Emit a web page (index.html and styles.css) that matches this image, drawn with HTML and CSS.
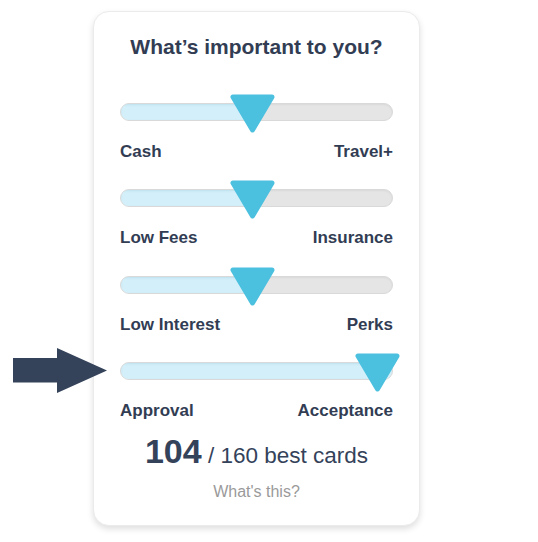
FILE: index.html
```html
<!DOCTYPE html>
<html>
<head>
<meta charset="utf-8">
<link rel="stylesheet" href="styles.css">
</head>
<body>
<svg class="pointer" width="96" height="46" viewBox="0 0 96 46" aria-hidden="true">
  <path d="M0 10 H44 V0 L94 22.5 L44 45 V34.5 H0 Z" fill="#34425a"/>
</svg>
<div class="card">
  <h1 class="title">What’s important to you?</h1>

  <div class="slider">
    <div class="track">
      <div class="fill" style="width:48.7%"></div>
    </div>
    <svg class="thumb" style="left:calc(48.7% - 22.5px)" width="45" height="39" viewBox="0 0 45 39"><path d="M3 3 H42 L22.5 36 Z"/></svg>
  </div>
  <div class="labels"><span>Cash</span><span>Travel+</span></div>

  <div class="slider">
    <div class="track">
      <div class="fill" style="width:48.7%"></div>
    </div>
    <svg class="thumb" style="left:calc(48.7% - 22.5px)" width="45" height="39" viewBox="0 0 45 39"><path d="M3 3 H42 L22.5 36 Z"/></svg>
  </div>
  <div class="labels"><span>Low Fees</span><span>Insurance</span></div>

  <div class="slider">
    <div class="track">
      <div class="fill" style="width:48.7%"></div>
    </div>
    <svg class="thumb" style="left:calc(48.7% - 22.5px)" width="45" height="39" viewBox="0 0 45 39"><path d="M3 3 H42 L22.5 36 Z"/></svg>
  </div>
  <div class="labels"><span>Low Interest</span><span>Perks</span></div>

  <div class="slider">
    <div class="track">
      <div class="fill" style="width:100%"></div>
    </div>
    <svg class="thumb" style="left:calc(94.3% - 22.5px)" width="45" height="39" viewBox="0 0 45 39"><path d="M3 3 H42 L22.5 36 Z"/></svg>
  </div>
  <div class="labels"><span>Approval</span><span>Acceptance</span></div>

  <div class="count"><strong>104</strong> / 160 best cards</div>
  <div class="help">What's this?</div>
</div>
</body>
</html>
```
FILE: styles.css
```css
html, body {
  margin: 0;
  padding: 0;
  background: #ffffff;
}
body {
  font-family: "Liberation Sans", Arial, sans-serif;
  position: relative;
  width: 538px;
  height: 542px;
  overflow: hidden;
}
.pointer {
  position: absolute;
  left: 13px;
  top: 348px;
}
.card {
  box-sizing: border-box;
  width: 327px;
  margin: 11px 0 0 93px;
  padding: 23px 26px 23px 26px;
  border: 1px solid #ebebeb;
  border-radius: 16px;
  background: #fff;
  box-shadow: 0 3px 6px rgba(0, 0, 0, 0.13);
}
.title {
  margin: 0 0 35px 0;
  font-size: 21px;
  line-height: 24px;
  font-weight: bold;
  text-align: center;
  color: #323d54;
}
.slider {
  position: relative;
  height: 39px;
}
.slider + .labels {
  margin-top: 9px;
}
.labels + .slider {
  margin-top: 18.33px;
}
.track {
  position: relative;
  top: 9px;
  height: 18px;
  box-sizing: border-box;
  border-radius: 9px;
  background: #e5e5e5;
  border: 1px solid #d9d9d9;
  box-shadow: inset 0 1px 2px rgba(0, 0, 0, 0.05);
  overflow: hidden;
}
.fill {
  height: 100%;
  background: #d3eff9;
  box-shadow: inset 0 1px 2px rgba(80, 160, 190, 0.15);
}
.thumb {
  position: absolute;
  top: 0;
}
.thumb path {
  fill: #4cc0df;
  stroke: #4cc0df;
  stroke-width: 5;
  stroke-linejoin: round;
}
.labels {
  display: flex;
  justify-content: space-between;
  font-size: 17px;
  line-height: 20px;
  font-weight: bold;
  color: #323d54;
}
.count {
  margin-top: 10px;
  text-align: center;
  font-size: 22.5px;
  line-height: 40px;
  color: #34425a;
}
.count strong {
  font-size: 34px;
  font-weight: bold;
}
.help {
  margin-top: 6px;
  text-align: center;
  font-size: 16px;
  line-height: 20px;
  color: #9a9a9a;
}
```
